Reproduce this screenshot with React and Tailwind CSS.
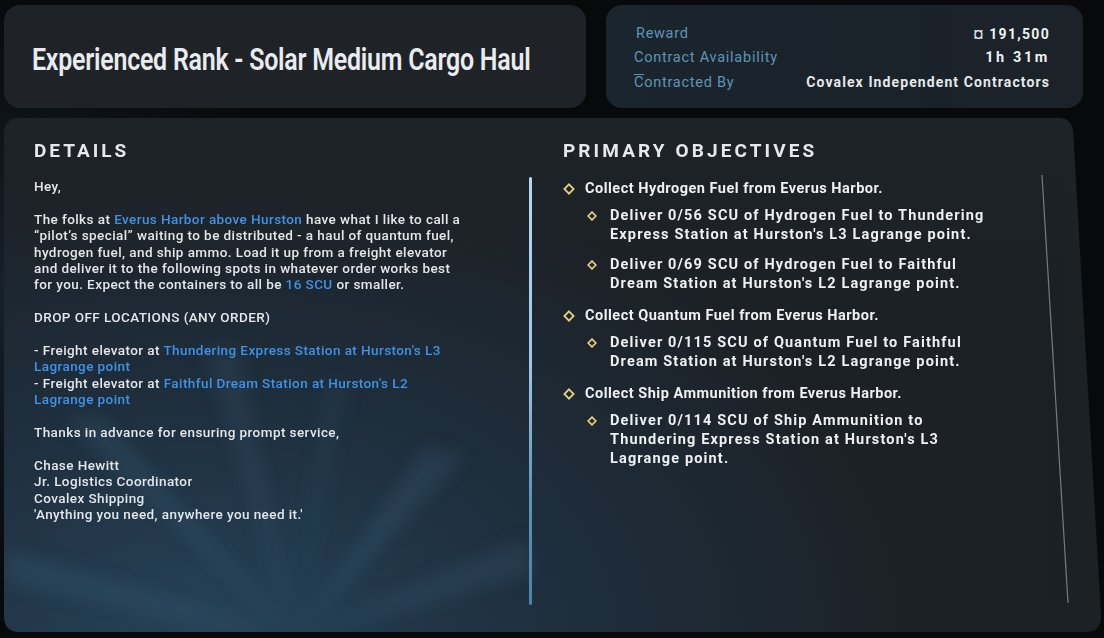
import React from 'react';

const Link = ({ children }) => <span className="text-[#3f93e6]">{children}</span>;

const Diamond = ({ big }) => (
    <svg
        width={big ? 12 : 10}
        height={big ? 12 : 10}
        viewBox="0 0 14 14"
        className="shrink-0"
    >
        <path d="M7 1.6 L12.4 7 L7 12.4 L1.6 7 Z" fill="none" stroke="#e6cf7c" strokeWidth={big ? 2.1 : 2.4} />
    </svg>
);

const objectives = [
    {
        title: 'Collect Hydrogen Fuel from Everus Harbor.',
        subs: [
            ['Deliver 0/56 SCU of Hydrogen Fuel to Thundering', "Express Station at Hurston's L3 Lagrange point."],
            ['Deliver 0/69 SCU of Hydrogen Fuel to Faithful', "Dream Station at Hurston's L2 Lagrange point."],
        ],
    },
    {
        title: 'Collect Quantum Fuel from Everus Harbor.',
        subs: [['Deliver 0/115 SCU of Quantum Fuel to Faithful', "Dream Station at Hurston's L2 Lagrange point."]],
    },
    {
        title: 'Collect Ship Ammunition from Everus Harbor.',
        subs: [['Deliver 0/114 SCU of Ship Ammunition to', "Thundering Express Station at Hurston's L3", 'Lagrange point.']],
    },
];

const App = () => {
    return (
        <div className="w-[1104px] h-[638px] overflow-hidden bg-[radial-gradient(ellipse_30%_45%_at_0%_45%,#15212c_0%,#08090b_100%)] font-['Roboto',sans-serif]">
            {/* top row */}
            <div className="flex gap-5 pl-1 pt-[5px]">
                <div className="w-[582px] h-[103px] rounded-2xl bg-[#1f2327] flex items-center pl-7">
                    <h1 className="text-[32px] font-semibold text-[#e9ecef] tracking-[-0.3px] scale-x-[0.78] origin-left whitespace-nowrap leading-none pt-1">
                        Experienced Rank - Solar Medium Cargo Haul
                    </h1>
                </div>
                <div className="w-[477px] h-[103px] rounded-2xl bg-[linear-gradient(90deg,#1b252d_0%,#1a222a_60%,#1c2228_100%)] pl-7 pr-[33px] pt-[17px]">
                    <div className="flex justify-between items-center h-[24px]">
                        <span className="text-[14.5px] text-[#5f94b6] pl-[2px] tracking-[0.7px]">Reward</span>
                        <span className="text-[14px] font-bold text-[#eef0f2] tracking-[1.3px]">¤ 191,500</span>
                    </div>
                    <div className="flex justify-between items-center h-[24px]">
                        <span className="text-[14.5px] text-[#5f94b6] tracking-[0.75px]">Contract Availability</span>
                        <span className="text-[14.5px] font-bold text-[#eef0f2] tracking-[2.6px]">1h 31m</span>
                    </div>
                    <div className="flex justify-between items-center h-[25px]">
                        <span className="text-[14.5px] text-[#5f94b6] tracking-[0.75px]">
                            <span className="inline-block border-t border-[#5f94b6] leading-[14px] pt-[1px]">C</span>ontracted By
                        </span>
                        <span className="text-[14px] font-bold text-[#e6e8ea] tracking-[1.1px]">Covalex Independent Contractors</span>
                    </div>
                </div>
            </div>

            {/* main panel */}
            <div className="relative ml-1 mt-[10px] w-[1098px] h-[514px] overflow-hidden bg-[#1c2126] [clip-path:path('M0,16_Q0,0_16,0_L1054,0_Q1068,0_1069,14_L1097,496_Q1098,514_1082,514_L16,514_Q0,514_0,498_Z')]">
                <div className="absolute inset-0 bg-[radial-gradient(ellipse_65%_90%_at_18%_100%,#274257_0%,#1f3040_45%,transparent_100%)]" />
                <div className="absolute inset-0 bg-[linear-gradient(180deg,#1e2328_0%,transparent_35%)]" />
                <svg className="absolute inset-0 pointer-events-none" width="1098" height="514">
                    <defs>
                        <filter id="blur" x="-50%" y="-50%" width="200%" height="200%">
                            <feGaussianBlur stdDeviation="9" />
                        </filter>
                    </defs>
                    <g filter="url(#blur)" fill="#4f86a8">
                        <polygon points="290,520 60,300 100,300" opacity="0.16" />
                        <polygon points="290,520 200,230 235,230" opacity="0.12" />
                        <polygon points="290,520 420,330 460,340" opacity="0.16" />
                        <polygon points="290,520 520,420 530,455" opacity="0.14" />
                        <polygon points="290,520 0,430 0,465" opacity="0.14" />
                        <polygon points="290,520 320,260 345,270" opacity="0.08" />
                    </g>
                    <line x1="1038" y1="57" x2="1064" y2="485" stroke="#8a949c" strokeWidth="1.2" opacity="0.8" />
                </svg>

                <div className="relative flex h-full">
                    {/* details */}
                    <div className="flex">
                        <div className="w-[525px] pl-[30px] pt-[20px]">
                            <h2 className="text-[19px] font-bold text-[#e6e9ec] tracking-[3px] leading-[26px]">DETAILS</h2>
                            <div className="mt-[14px] text-[13.5px] font-medium text-[#e4e7ea] leading-[16.4px] tracking-[0.42px] whitespace-nowrap">
                                <p>Hey,</p>
                                <p>&nbsp;</p>
                                <p>
                                    The folks at <Link>Everus Harbor above Hurston</Link> have what I like to call a
                                </p>
                                <p>“pilot’s special” waiting to be distributed - a haul of quantum fuel,</p>
                                <p>hydrogen fuel, and ship ammo. Load it up from a freight elevator</p>
                                <p>and deliver it to the following spots in whatever order works best</p>
                                <p>
                                    for you. Expect the containers to all be <Link>16 SCU</Link> or smaller.
                                </p>
                                <p>&nbsp;</p>
                                <p>DROP OFF LOCATIONS (ANY ORDER)</p>
                                <p>&nbsp;</p>
                                <p>
                                    - Freight elevator at <Link>Thundering Express Station at Hurston's L3</Link>
                                </p>
                                <p>
                                    <Link>Lagrange point</Link>
                                </p>
                                <p>
                                    - Freight elevator at <Link>Faithful Dream Station at Hurston's L2</Link>
                                </p>
                                <p>
                                    <Link>Lagrange point</Link>
                                </p>
                                <p>&nbsp;</p>
                                <p>Thanks in advance for ensuring prompt service,</p>
                                <p>&nbsp;</p>
                                <p>Chase Hewitt</p>
                                <p>Jr. Logistics Coordinator</p>
                                <p>Covalex Shipping</p>
                                <p>'Anything you need, anywhere you need it.'</p>
                            </div>
                        </div>
                        <div className="w-[3px] mt-[59px] h-[428px] rounded-sm bg-[linear-gradient(180deg,#b4d8f4_0%,#9cc6e8_45%,#5c93bb_75%,#4b82aa_100%)]" />
                    </div>

                    {/* objectives */}
                    <div className="pl-[31px] pt-[20px]">
                        <h2 className="text-[19px] font-bold text-[#e6e9ec] tracking-[3.1px] leading-[26px]">PRIMARY OBJECTIVES</h2>
                        <div className="mt-[15px] flex flex-col gap-[13px] text-[#eef0f2] font-bold">
                            {objectives.map((o) => (
                                <div key={o.title}>
                                    <div className="flex items-center gap-[10px] h-[20px] text-[14.5px] tracking-[0.5px]">
                                        <Diamond big />
                                        <span>{o.title}</span>
                                    </div>
                                    <div className="mt-[7px] flex flex-col gap-[11px] pl-[24px]">
                                        {o.subs.map((lines) => (
                                            <div key={lines[0]} className="flex gap-[13px]">
                                                <div className="h-[19px] flex items-center">
                                                    <Diamond />
                                                </div>
                                                <div className="text-[14.5px] leading-[19px] tracking-[1.15px] whitespace-nowrap">
                                                    {lines.map((l) => (
                                                        <p key={l}>{l}</p>
                                                    ))}
                                                </div>
                                            </div>
                                        ))}
                                    </div>
                                </div>
                            ))}
                        </div>
                    </div>
                </div>
            </div>
        </div>
    );
};

export default App;
